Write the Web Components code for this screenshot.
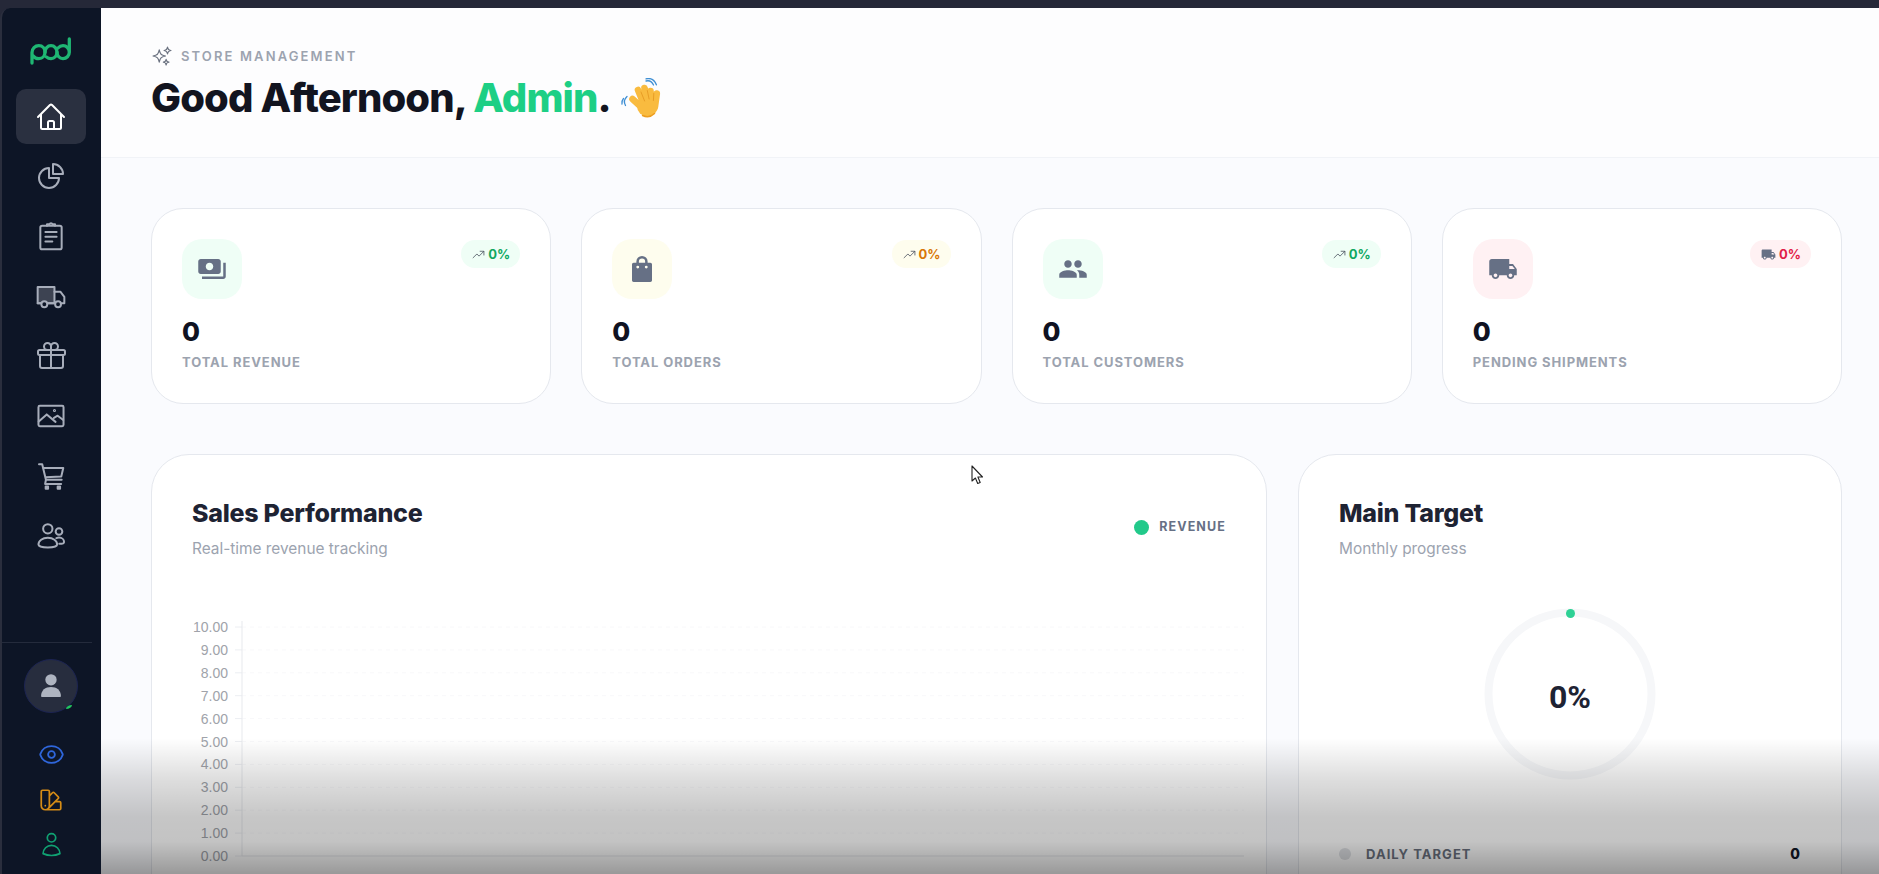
<!DOCTYPE html>
<html lang="en">
<head>
<meta charset="utf-8">
<title>Store Management</title>
<style>
  html,body{margin:0;height:874px;overflow:hidden}
  body{background:#252838;font-family:Inter,"Liberation Sans",sans-serif}
  pod-app{height:874px}
</style>
</head>
<body>
<pod-app>
  <pod-sidebar slot="side">
    <pod-logo slot="logo"></pod-logo>
    <nav-item active icon="home"></nav-item>
    <nav-item icon="pie"></nav-item>
    <nav-item icon="clip"></nav-item>
    <nav-item icon="truck"></nav-item>
    <nav-item icon="gift"></nav-item>
    <nav-item icon="image"></nav-item>
    <nav-item icon="cart"></nav-item>
    <nav-item icon="users"></nav-item>
  </pod-sidebar>
  <page-header>
    <span slot="kicker">STORE MANAGEMENT</span>
    <span slot="title">Good Afternoon, <accent-text>Admin</accent-text>.</span>
  </page-header>
  <stat-row>
    <stat-card tone="green" icon="money" value="0" label="TOTAL REVENUE" pct="0%"></stat-card>
    <stat-card tone="yellow" icon="bag" value="0" label="TOTAL ORDERS" pct="0%"></stat-card>
    <stat-card tone="green" icon="people" value="0" label="TOTAL CUSTOMERS" pct="0%"></stat-card>
    <stat-card tone="red" icon="van" value="0" label="PENDING SHIPMENTS" pct="0%" pill-icon="van"></stat-card>
  </stat-row>
  <panel-row>
    <info-panel heading="Sales Performance" sub="Real-time revenue tracking">
      <chart-legend slot="aside">REVENUE</chart-legend>
      <sales-chart></sales-chart>
    </info-panel>
    <info-panel heading="Main Target" sub="Monthly progress">
      <target-ring>0%</target-ring>
      <target-row label="DAILY TARGET" value="0"></target-row>
    </info-panel>
  </panel-row>
</pod-app>

<script>
const ICONS = {
  home:`<path d="M2.25 12l8.954-8.955c.44-.439 1.152-.439 1.591 0L21.75 12M4.5 9.75v10.125c0 .621.504 1.125 1.125 1.125H9.75v-4.875c0-.621.504-1.125 1.125-1.125h2.25c.621 0 1.125.504 1.125 1.125V21h4.125c.621 0 1.125-.504 1.125-1.125V9.75M8.25 21h8.25"/>`,
  pie:`<path d="M10.5 6a7.5 7.5 0 107.5 7.5h-7.5V6z"/><path d="M13.5 10.5H21A7.5 7.5 0 0013.5 3v7.5z"/>`,
  clip:`<rect x="4.000" y="4.300" width="16" height="17.700" rx="1.400"/><path d="M9 4.300V3.200h1.800a1.300 1.300 0 012.400 0H15v1.100M7.800 9h8.400M7.800 12.600h8.400M7.800 16.200h5.200"/>`,
  truck:`<path d="M2 5.2h12.6v12.3H2z" fill="#3d4352"/><path d="M14.6 8.8h4.4l3 3.8v4.9h-2M14.6 17.5h-5M5 17.5H2"/><circle cx="7" cy="18.2" r="2.2" fill="#0d1526"/><circle cx="17.3" cy="18.2" r="2.2" fill="#0d1526"/>`,
  gift:`<path d="M21 11.25v8.25a1.5 1.5 0 01-1.5 1.5H5.25a1.5 1.5 0 01-1.5-1.5v-8.25M12 4.875A2.625 2.625 0 109.375 7.5H12m0-2.625V7.5m0-2.625A2.625 2.625 0 1114.625 7.5H12m0 0V21m-8.625-9.75h18c.621 0 1.125-.504 1.125-1.125v-1.5c0-.621-.504-1.125-1.125-1.125h-18c-.621 0-1.125.504-1.125 1.125v1.5c0 .621.504 1.125 1.125 1.125z"/>`,
  image:`<rect x="2.600" y="4.400" width="18.800" height="15.200" rx="1"/><path d="M2.800 16.200l6-5.400 6.600 5.600M14.200 13.400l2.800-1.600 4.200 3.200"/><circle cx="14.600" cy="7.900" r=".4"/>`,
  cart:`<path d="M3 3.200h2.400l2.800 11.600H20M5.900 6h15.300l-1.500 6.400-11.800.6M8.200 14.800l-.6 3.200h12"/><rect x="8" y="19.900" width="1.800" height="1.600" fill="currentColor"/><rect x="17" y="19.900" width="1.800" height="1.600" fill="currentColor"/>`,
  users:`<circle cx="9.600" cy="6.600" r="3.500"/><circle cx="18" cy="8.600" r="2.500"/><path d="M2.600 18.400c0-3 3-5 7-5s7 2 7 5c0 1.200-2.900 2.200-7 2.200s-7-1-7-2.200z"/><path d="M16 13.600c.6-.2 1.300-.4 2-.4 2.300 0 3.800 1.600 3.800 3.300 0 .9-1.700 1.400-3.600 1.400"/>`,
  eye:`<path d="M2.036 12.322a1.012 1.012 0 010-.639C3.423 7.51 7.36 4.5 12 4.5c4.638 0 8.573 3.007 9.963 7.178.07.207.07.431 0 .639C20.577 16.49 16.64 19.5 12 19.5c-4.638 0-8.573-3.007-9.963-7.178z"/><path d="M15 12a3 3 0 11-6 0 3 3 0 016 0z"/>`,
  swatch:`<path d="M4.098 19.902a3.75 3.75 0 005.304 0l6.401-6.402M6.75 21A3.75 3.75 0 013 17.25V4.125C3 3.504 3.504 3 4.125 3h5.25c.621 0 1.125.504 1.125 1.125v4.072M6.75 21a3.75 3.75 0 003.75-3.75V8.197M6.75 21h13.125c.621 0 1.125-.504 1.125-1.125v-5.25c0-.621-.504-1.125-1.125-1.125h-4.072M10.5 8.197l2.88-2.88c.438-.439 1.15-.439 1.59 0l3.712 3.713c.44.44.44 1.152 0 1.59l-2.879 2.88M6.75 17.25h.008v.008H6.75v-.008z"/>`,
  user:`<path d="M15.75 6a3.75 3.75 0 11-7.5 0 3.75 3.75 0 017.5 0zM4.501 20.118a7.5 7.5 0 0114.998 0A17.933 17.933 0 0112 21.75c-2.676 0-5.216-.584-7.499-1.632z"/>`,
  sparkles:`<path d="M9.813 15.904L9 18.75l-.813-2.846a4.5 4.5 0 00-3.09-3.09L2.25 12l2.846-.813a4.5 4.5 0 003.09-3.09L9 5.25l.813 2.846a4.5 4.5 0 003.09 3.09L15.75 12l-2.846.813a4.5 4.5 0 00-3.09 3.09zM18.259 8.715L18 9.75l-.259-1.035a3.375 3.375 0 00-2.455-2.456L14.25 6l1.036-.259a3.375 3.375 0 002.455-2.456L18 2.25l.259 1.035a3.375 3.375 0 002.456 2.456L21.75 6l-1.035.259a3.375 3.375 0 00-2.456 2.456zM16.894 20.567L16.5 21.75l-.394-1.183a2.25 2.25 0 00-1.423-1.423L13.5 18.75l1.183-.394a2.25 2.25 0 001.423-1.423l.394-1.183.394 1.183a2.25 2.25 0 001.423 1.423l1.183.394-1.183.394a2.25 2.25 0 00-1.423 1.423z"/>`,
  trend:`<path d="M2 18l7-7 4 4 8.500-8.500M15 6h7v7"/>`
};
const FILLED = {
  money:`<path d="M19 14V6c0-1.100-.900-2-2-2H3c-1.100 0-2 .900-2 2v8c0 1.100.900 2 2 2h14c1.100 0 2-.900 2-2zm-9-1c-1.660 0-3-1.340-3-3s1.340-3 3-3 3 1.340 3 3-1.340 3-3 3zm13-6v11c0 1.100-.900 2-2 2H4v-2h17V7h2z"/>`,
  bag:`<path fill-rule="evenodd" d="M7.500 7V6a4.500 4.500 0 019 0v1h2.200c.700 0 1.300.600 1.300 1.300V21c0 .800-.600 1.300-1.300 1.300H5.300C4.600 22.300 4 21.800 4 21V8.300C4 7.600 4.600 7 5.300 7zM9.500 7h5V6a2.500 2.500 0 00-5 0zm-.900 2.300a1 1 0 100 2.300 1 1 0 000-2.300zm6.800 0a1 1 0 100 2.300 1 1 0 000-2.300z"/>`,
  people:`<path d="M16 11c1.660 0 2.990-1.340 2.990-3S17.660 5 16 5c-1.660 0-3 1.340-3 3s1.340 3 3 3zm-8 0c1.660 0 2.990-1.340 2.990-3S9.660 5 8 5C6.340 5 5 6.340 5 8s1.340 3 3 3zm0 2c-2.330 0-7 1.170-7 3.500V19h14v-2.500c0-2.330-4.670-3.500-7-3.500zm8 0c-.290 0-.620.020-.970.050 1.160.840 1.970 1.970 1.970 3.450V19h6v-2.500c0-2.330-4.670-3.500-7-3.500z"/>`,
  van:`<path d="M20 8h-3V4H3c-1.100 0-2 .900-2 2v11h2c0 1.660 1.340 3 3 3s3-1.340 3-3h6c0 1.660 1.340 3 3 3s3-1.340 3-3h2v-5l-3-4zM6 18.500c-.830 0-1.500-.670-1.500-1.500s.670-1.500 1.500-1.500 1.500.670 1.500 1.500-.670 1.500-1.500 1.500zm13.500-9l1.960 2.500H17V9.500h2.500zm-1.500 9c-.830 0-1.500-.670-1.500-1.500s.670-1.500 1.500-1.500 1.500.670 1.500 1.500-.670 1.500-1.500 1.500z"/>`
};
const stroke = (n,s,w=1.5)=>`<svg width="${s}" height="${s}" viewBox="0 0 24 24" fill="none" stroke="currentColor" stroke-width="${w}" stroke-linecap="round" stroke-linejoin="round" aria-hidden="true">${ICONS[n]}</svg>`;
const fill = (n,s)=>`<svg width="${s}" height="${s}" viewBox="0 0 24 24" fill="currentColor" aria-hidden="true">${FILLED[n]}</svg>`;

class Base extends HTMLElement{
  constructor(){super();this.attachShadow({mode:'open'});}
  connectedCallback(){this.shadowRoot.innerHTML=this.render();}
}

customElements.define('accent-text',class extends Base{render(){return `<style>:host{display:inline;color:#1dcf85}</style><slot></slot>`}});

customElements.define('pod-app',class extends Base{render(){return `
<style>
  :host{display:flex;box-sizing:border-box;padding-top:8px;position:relative;overflow:hidden;background:#252838}
  main{flex:1;min-width:0;background:#fafbfe;overflow:hidden;position:relative;display:block}
  .scrim{position:absolute;left:0;right:0;bottom:0;height:136px;pointer-events:none;z-index:5;
    background:linear-gradient(to bottom,rgba(0,0,0,0) 0%,rgba(0,0,0,.13) 30%,rgba(0,0,0,.225) 58%,rgba(0,0,0,.235) 76%,rgba(0,0,0,.4) 100%)}
  .cursor{position:absolute;left:870px;top:457px;z-index:6;width:14px;height:20px}
</style>
<slot name="side"></slot>
<main>
  <slot></slot>
  <svg class="cursor" viewBox="0 0 14 20" aria-hidden="true"><path d="M1 1v15l3.400-3 2.300 5.500 2.500-1-2.300-5.500H11.500z" fill="#fff" stroke="#222" stroke-width="1.100" stroke-linejoin="round"/></svg>
  <div class="scrim"></div>
</main>`}});

customElements.define('pod-logo',class extends Base{render(){return `
<style>:host{display:block;width:42px;height:28px}svg{display:block}</style>
<svg width="42" height="28" viewBox="0 0 42 28" fill="none" stroke="#1fb673" stroke-width="3.300" stroke-linecap="round" aria-label="pod logo" role="img">
  <path d="M2 26V15.500a6.800 6.800 0 0 1 6.800-6.800c3.800 0 6.200 3 6.200 6.500s-2.400 6.500-6.200 6.500c-2.800 0-4.600-1.300-5.800-3"/>
  <path d="M15 15.200c0-3.500 2.500-6.500 6-6.500s6 3 6 6.500-2.500 6.500-6 6.500c-2 0-3.500-.700-4.700-1.800"/>
  <path d="M27 15.200c0 3.500 2.500 6.500 6 6.500s6.300-3 6.300-6.500-2.800-6.500-6.300-6.500c-2.200 0-3.800 1-5 2.300M39.300 15.500V2"/>
</svg>`}});

customElements.define('pod-sidebar',class extends Base{render(){return `
<style>
  :host{display:flex;flex-direction:column;flex:0 0 99px;box-sizing:content-box;width:99px;background:#0d1526;border-left:2px solid #2a2e3d;border-top-left-radius:10px;height:866px;overflow:hidden}
  .logo{display:flex;justify-content:center;padding:29px 0 0 0;height:52px;margin-right:1px}
  nav{display:flex;flex-direction:column;gap:5px;padding:0 15px 0 14px}
  footer{margin-top:auto;margin-right:9px;border-top:1px solid #242b3c;height:232px;box-sizing:border-box;display:flex;flex-direction:column;align-items:flex-start;padding:16px 0 0 0}
  .col{display:flex;flex-direction:column;align-items:center;width:98px}
  .avatar{position:relative;box-sizing:border-box;width:54px;height:54px;border-radius:50%;background:#272d3e;border:1.500px solid #1c2452;display:flex;align-items:center;justify-content:center;color:#aeb4c0}
  .dot{position:absolute;right:5px;bottom:3px;width:6px;height:4px;background:#22c55e;border-radius:100% 0 100% 0}
  .tools{display:flex;flex-direction:column;align-items:center;margin-top:19px}
  .tools span{height:45px;display:flex;align-items:center;justify-content:center}
</style>
<div class="logo"><slot name="logo"></slot></div>
<nav><slot></slot></nav>
<footer>
  <div class="col">
  <div class="avatar">
    <svg width="34" height="34" viewBox="0 0 36 36" fill="currentColor" aria-hidden="true"><circle cx="18" cy="11.500" r="6"/><path d="M7.500 28.500c0-6 4.500-9.500 10.500-9.500s10.500 3.500 10.500 9.500c0 .800-.500 1.200-1.200 1.200H8.700c-.700 0-1.200-.400-1.200-1.200z"/></svg>
    <i class="dot"></i>
  </div>
  <div class="tools">
    <span style="color:#2f66db">${stroke('eye',27,1.6)}</span>
    <span style="color:#d58c16">${stroke('swatch',26,1.6)}</span>
    <span style="color:#10a172">${stroke('user',27,1.5)}</span>
  </div>
  </div>
</footer>`}});

customElements.define('nav-item',class extends Base{render(){const on=this.hasAttribute('active');return `
<style>
  :host{display:flex;align-items:center;justify-content:center;width:70px;height:55px;border-radius:10px;color:#a7adba;${on?'background:#2a3040;color:#fff;':''}}
  svg{display:block;${on?'':'margin-bottom:2px;'}}
</style>${stroke(this.getAttribute('icon'),32,1.5)}`}});

customElements.define('hand-wave',class extends Base{render(){return `
<style>:host{display:block;flex:0 0 43px;width:43px;height:41px}svg{display:block}</style>
<svg width="43" height="41" viewBox="0 0 43 41" fill="none" stroke-linecap="round" role="img" aria-label="waving hand">
  <path d="M5.500 20.500c-1.500 1.800-2 3.500-1.500 5.500M9 18.500c-2.500 2.300-3.200 6-1.500 9" stroke="#3f8fd4" stroke-width="1.300"/>
  <path d="M28 3c3-.800 6 .500 7.500 4M28 .800c4.500-1 8.500 1 10.400 6" stroke="#3f8fd4" stroke-width="1.300"/>
  <g stroke="#f9bb3f" stroke-width="6.600">
    <path d="M14.500 21l12 11M20 12l7 17M26.500 10l4 17M32.500 13l.500 15M38.800 15.500l-1.800 13"/>
  </g>
  <circle cx="29.500" cy="28" r="10.500" fill="#f9bb3f"/>
  <path d="M23 14l3.600 9M29.300 12.500l1.800 8.500M35.800 15.500l-.400 7" stroke="#e59a22" stroke-width=".900"/>
  <path d="M36.500 35.500a10.600 10.600 0 0 1-12 2" stroke="#ed9d1f" stroke-width="1.400"/>
</svg>`}});

customElements.define('page-header',class extends Base{render(){return `
<style>
  :host{display:block;box-sizing:border-box;height:150px;background:#fdfdfe;border-bottom:1px solid #f1f3f7;padding:37px 0 0 50px}
  .kick{display:flex;align-items:center;gap:8px;height:22px;color:#6b7280}
  .kick b{font:600 13px/22px Inter,"Liberation Sans",sans-serif;letter-spacing:.163em;color:#9ca3af}
  .row{display:flex;align-items:center;height:48px;margin-top:7px}
  h1{margin:0;font:800 40px/48px Inter,"Liberation Sans",sans-serif;letter-spacing:-.022em;color:#12141f;white-space:nowrap}
  hand-wave{margin-left:7px}
</style>
<div class="kick">${stroke('sparkles',22,1.3)}<b><slot name="kicker"></slot></b></div>
<div class="row"><h1><slot name="title"></slot></h1><hand-wave></hand-wave></div>`}});

customElements.define('stat-row',class extends Base{render(){return `
<style>:host{display:grid;grid-template-columns:repeat(4,1fr);gap:30px;padding:50px 37px 0 50px}</style><slot></slot>`}});

const TONES={green:['#effef6','#10a862'],yellow:['#fefdee','#d97706'],red:['#fff1f3','#e11d48']};
customElements.define('stat-card',class extends Base{render(){
  const [bg,fg]=TONES[this.getAttribute('tone')];const a=n=>this.getAttribute(n);
  const pi=a('pill-icon')?fill(a('pill-icon'),15):`<span class="tr">${stroke('trend',13,1.4)}</span>`;
  return `
<style>
  :host{display:block;box-sizing:border-box;height:196px;background:#fff;border:1px solid #e5e8ee;border-radius:32px;padding:30px 30px 0 30px;font-family:Inter,"Liberation Sans",sans-serif}
  .top{display:flex;justify-content:space-between;align-items:flex-start}
  .ic{width:60px;height:60px;border-radius:20px;background:${bg};display:flex;align-items:center;justify-content:center;color:#667085}
  .pill{height:28px;margin-top:1px;border-radius:14px;background:${bg};display:flex;align-items:center;gap:3px;padding:0 10px 0 11px;color:#667085;font:700 13px/28px Inter,"Liberation Sans",sans-serif}
  .pill b{color:${fg};font-weight:700}
  .tr{display:flex;color:#3f4754}
  .val{margin-top:17px;font:800 26px/32px Inter,"Liberation Sans",sans-serif;color:#0f1222}
  .lab{margin-top:5px;font:700 13px/18px Inter,"Liberation Sans",sans-serif;letter-spacing:.07em;color:#9ca3af}
</style>
<div class="top"><div class="ic">${fill(a('icon'),30)}</div><div class="pill">${pi}<b>${a('pct')}</b></div></div>
<div class="val">${a('value')}</div><div class="lab">${a('label')}</div>`}});

customElements.define('panel-row',class extends Base{render(){return `
<style>:host{display:grid;grid-template-columns:minmax(0,1fr) 544px;gap:31px;padding:50px 37px 0 50px}</style><slot></slot>`}});

customElements.define('info-panel',class extends Base{render(){return `
<style>
  :host{display:block;box-sizing:border-box;height:480px;background:#fff;border:1px solid #e5e8ee;border-radius:38px;padding:42px 40px 0 40px}
  .head{display:flex;justify-content:space-between;align-items:flex-start;height:74px}
  h2{margin:0;font:800 25px/32px Inter,"Liberation Sans",sans-serif;letter-spacing:-.01em;color:#1e2333}
  p{margin:9px 0 0;font:400 15.400px/22px Inter,"Liberation Sans",sans-serif;color:#9ca3af}
</style>
<div class="head"><div><h2>${this.getAttribute('heading')}</h2><p>${this.getAttribute('sub')}</p></div><slot name="aside"></slot></div>
<slot></slot>`}});

customElements.define('chart-legend',class extends Base{render(){return `
<style>
  :host{display:flex;align-items:center;gap:10px;margin-top:20px;height:20px;font:700 12.500px/20px Inter,"Liberation Sans",sans-serif;letter-spacing:.09em;color:#667085}
  i{width:15px;height:15px;border-radius:50%;background:#22c98a}
</style><i></i><slot></slot>`}});

customElements.define('sales-chart',class extends Base{render(){
  let s='';
  for(let i=0;i<=10;i++){
    const y=17+i*22.9;const v=(10-i).toFixed(2);
    s+=`<text x="37" y="${y+5}" text-anchor="end" font-family="Liberation Sans" font-size="14" fill="#a0a3aa">${v}</text>`;
    s+=`<line x1="44" x2="51" y1="${y}" y2="${y}" stroke="#eceef2"/>`;
    if(i<10) s+=`<line x1="51" x2="1053" y1="${y}" y2="${y}" stroke="#f8f8fa" stroke-dasharray="4 4"/>`;
  }
  s+=`<line x1="51" x2="51" y1="11" y2="246" stroke="#e7e9ed"/><line x1="51" x2="1053" y1="246" y2="246" stroke="#e5e7eb"/>`;
  return `<style>:host{display:block;margin-top:39px;margin-right:-19px;margin-left:-1px}svg{display:block}</style>
<svg width="1053" height="270" viewBox="0 0 1053 270" role="img" aria-label="Sales chart">${s}</svg>`}});

customElements.define('target-ring',class extends Base{render(){return `
<style>
  :host{display:block;position:relative;width:172px;height:172px;margin:37px auto 0}
  svg{display:block}
  .dot{position:absolute;left:81.500px;top:0.500px;width:9px;height:9px;border-radius:50%;background:#2fd195}
  .t{position:absolute;inset:0;display:flex;align-items:center;justify-content:center;font:700 32px/1 Roboto,"Liberation Sans",sans-serif;color:#1e2333;padding-top:5px;box-sizing:border-box}
</style>
<svg width="172" height="172" viewBox="0 0 172 172" aria-hidden="true"><circle cx="86" cy="86" r="81.500" fill="none" stroke="#f6f7f9" stroke-width="8"/></svg>
<i class="dot"></i><div class="t"><slot></slot></div>`}});

customElements.define('target-row',class extends Base{render(){return `
<style>
  :host{display:flex;align-items:center;margin-top:64px;height:20px}
  i{width:12px;height:12px;border-radius:50%;background:#e0e2e6;margin-right:15px}
  b{font:700 13px/20px Inter,"Liberation Sans",sans-serif;letter-spacing:.08em;color:#6b7280}
  u{margin-left:auto;text-decoration:none;font:800 14px/20px Inter,"Liberation Sans",sans-serif;color:#111827;margin-right:1px}
</style><i></i><b>${this.getAttribute('label')}</b><u>${this.getAttribute('value')}</u>`}});
</script>
</body>
</html>
